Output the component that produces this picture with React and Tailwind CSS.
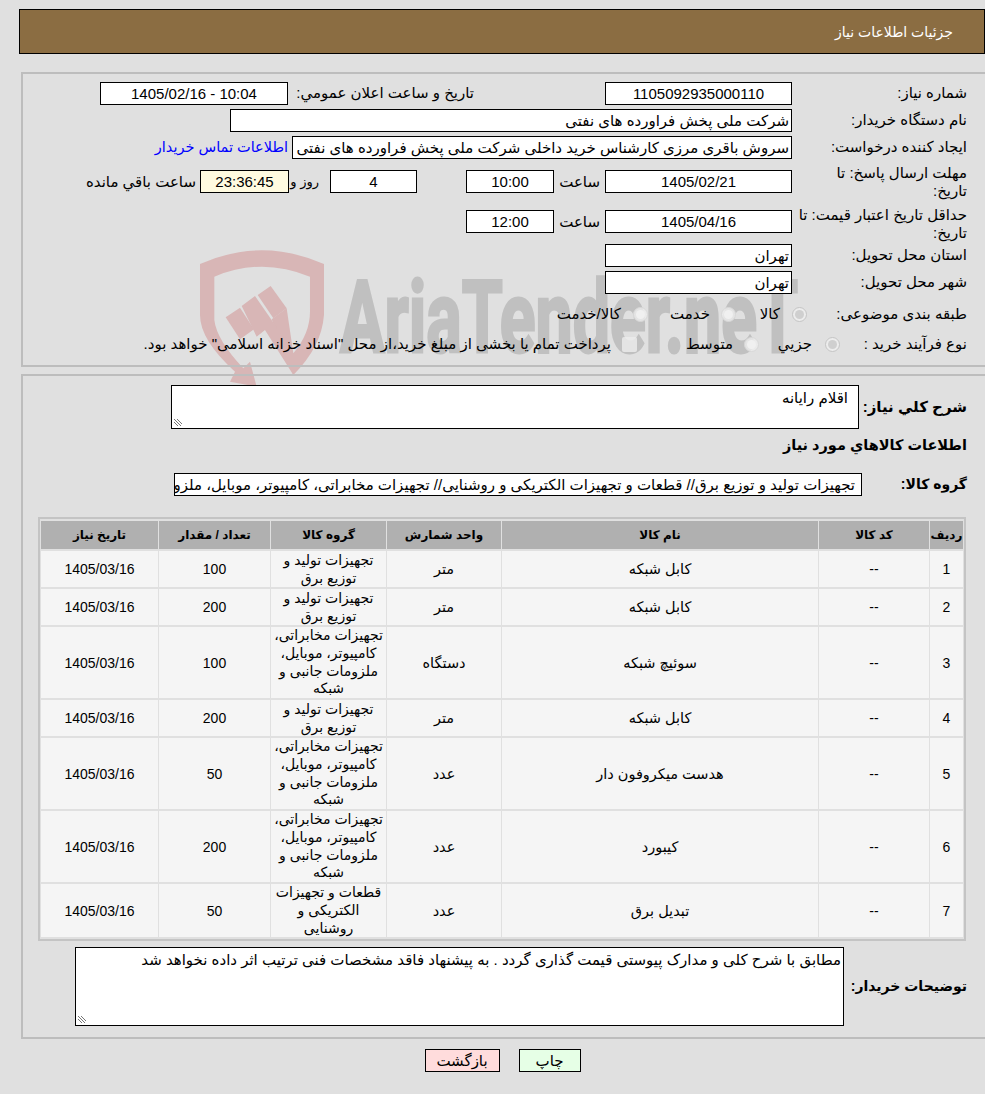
import React from "react";

const rows = [
  { id: 1, name: "کابل شبکه", unit: "متر", group: "تجهیزات تولید و توزیع برق", qty: 100 },
  { id: 2, name: "کابل شبکه", unit: "متر", group: "تجهیزات تولید و توزیع برق", qty: 200 },
  { id: 3, name: "سوئیچ شبکه", unit: "دستگاه", group: "تجهیزات مخابراتی، کامپیوتر، موبایل، ملزومات جانبی و شبکه", qty: 100, tall: true },
  { id: 4, name: "کابل شبکه", unit: "متر", group: "تجهیزات تولید و توزیع برق", qty: 200 },
  { id: 5, name: "هدست میکروفون دار", unit: "عدد", group: "تجهیزات مخابراتی، کامپیوتر، موبایل، ملزومات جانبی و شبکه", qty: 50, tall: true },
  { id: 6, name: "کیبورد", unit: "عدد", group: "تجهیزات مخابراتی، کامپیوتر، موبایل، ملزومات جانبی و شبکه", qty: 200, tall: true },
  { id: 7, name: "تبدیل برق", unit: "عدد", group: "قطعات و تجهیزات الکتریکی و روشنایی", qty: 50, tall: true, narrow: true },
];

const Field = ({ className = "", children }) => (
  <div className={`h-[23px] shrink-0 border border-black text-[15px] leading-[21px] whitespace-nowrap overflow-hidden ${className}`}>
    {children}
  </div>
);

const Radio = ({ dim }) => (
  <span className={`inline-block shrink-0 w-[15px] h-[15px] rounded-full border ${dim ? "border-[#d8d8d8] bg-[#ececec]/80" : "border-[#c4c4c4] bg-[#ececec]"}`}>
    <span className={`block w-[9px] h-[9px] m-[2px] rounded-full ${dim ? "bg-[#f0f0f0]" : "bg-[#cfcfcf]"}`} />
  </span>
);

const Grip = () => (
  <svg className="absolute left-[1px] bottom-[1px]" width="10" height="10" viewBox="0 0 10 10">
    <path d="M1 2 L8 9 M1 5 L5 9 M4 2 L9 7" stroke="#777" strokeWidth="1" />
  </svg>
);

const Watermark = () => (
  <svg dir="ltr" className="absolute left-[190px] top-[240px] pointer-events-none" width="640" height="160" viewBox="0 0 640 160">
    <g transform="scale(0.3333)" fill="#d8b6b6">
      <path fillRule="evenodd" d="M30 72 Q215 -10 402 72 L402 225 Q395 320 310 405 L245 238 L290 205 L310 340 Q360 280 360 215 L360 110 Q215 50 73 110 L73 240 Q80 300 160 385 L180 365 L200 440 L120 425 L135 395 Q30 300 30 225 Z" />
      <path d="M107 232 L150 203 L192 268 L150 298 Z" />
      <path d="M155 198 L195 168 L245 240 L310 340 L310 405 L225 270 L200 290 Z" />
      <path d="M203 165 L242 138 L290 205 L250 235 Z" />
    </g>
    <text x="150" y="112" textAnchor="start" direction="ltr" fontFamily="Roboto" fontWeight="700" fontSize="100" fill="#c0c0c0" stroke="#c0c0c0" strokeWidth="3" textLength="458" lengthAdjust="spacingAndGlyphs">
      AriaTender.neT
    </text>
  </svg>
);

const App = () => {
  return (
    <div dir="rtl" className="relative min-h-[1094px] bg-[#e0e0e0] pt-[9px] text-[15px] text-black font-['Liberation_Sans','DejaVu_Sans',sans-serif]">
      <Watermark />

      {/* Title bar */}
      <div className="ml-[19px] h-[45px] border border-black bg-[#8b6d42] pr-[31px] pt-[12px] text-[14px] text-white leading-[20px]">
        جزئیات اطلاعات نیاز
      </div>

      {/* Details */}
      <div className="relative ml-[21px] mt-[18px] h-[295px] border-2 border-[#bdbdbd] border-r-0 pr-[18px] pt-[8px]">
        <div className="flex items-center h-[23px]">
          <div className="w-[175px]">شماره نیاز:</div>
          <Field className="w-[187px] bg-white text-center">1105092935000110</Field>
          <div className="w-[317px] pr-[131px] whitespace-nowrap">تاریخ و ساعت اعلان عمومي:</div>
          <Field className="w-[188px] bg-white text-center"><span dir="ltr">1405/02/16 - 10:04</span></Field>
        </div>
        <div className="flex items-center mt-[4px] h-[23px]">
          <div className="w-[175px]">نام دستگاه خریدار:</div>
          <Field className="w-[562px] bg-white px-[2px]">شرکت ملی پخش فراورده های نفتی</Field>
        </div>
        <div className="flex items-center mt-[4px] h-[23px]">
          <div className="w-[175px]">ایجاد کننده درخواست:</div>
          <Field className="w-[500px] bg-white px-[2px]">سروش باقری مرزی کارشناس خرید داخلی شرکت ملی پخش فراورده های نفتی</Field>
          <a className="mr-[4px] text-[14.5px] text-[#0000ff] whitespace-nowrap">اطلاعات تماس خریدار</a>
        </div>
        <div className="flex items-start mt-[11px] h-[36px]">
          <div className="w-[175px] -mt-[6px] pl-[14px] leading-[18px]">مهلت ارسال پاسخ: تا تاریخ:</div>
          <Field className="w-[187px] bg-white text-center">1405/02/21</Field>
          <div className="w-[51px] pr-[5px] leading-[23px]">ساعت</div>
          <Field className="w-[88px] bg-white text-center">10:00</Field>
          <div className="w-[49px]" />
          <Field className="w-[87px] bg-white text-center">4</Field>
          <div className="w-[41px] pr-[11px] text-[13px] leading-[23px] whitespace-nowrap">روز و</div>
          <Field className="w-[89px] bg-[#fffbe0] text-center">23:36:45</Field>
          <div className="pr-[4px] leading-[23px] whitespace-nowrap">ساعت باقي مانده</div>
        </div>
        <div className="flex items-start mt-[4px] h-[36px]">
          <div className="w-[175px] -mt-[4px] leading-[18px]">حداقل تاریخ اعتبار قیمت: تا تاریخ:</div>
          <Field className="w-[187px] bg-white text-center">1405/04/16</Field>
          <div className="w-[51px] pr-[5px] leading-[23px]">ساعت</div>
          <Field className="w-[88px] bg-white text-center">12:00</Field>
        </div>
        <div className="flex items-center mt-[-2px] h-[23px]">
          <div className="w-[175px]">استان محل تحویل:</div>
          <Field className="w-[187px] bg-white px-[2px]">تهران</Field>
        </div>
        <div className="flex items-center mt-[4px] h-[23px]">
          <div className="w-[175px]">شهر محل تحویل:</div>
          <Field className="w-[187px] bg-white px-[2px]">تهران</Field>
        </div>
        <div className="flex items-center mt-[9px] h-[23px]">
          <div className="w-[160px]">طبقه بندی موضوعی:</div>
          <Radio />
          <div className="w-[56px] pr-[12px]">کالا</div>
          <Radio dim />
          <div className="w-[73px] pr-[11px]">خدمت</div>
          <Radio dim />
          <div className="pr-[12px]">کالا/خدمت</div>
        </div>
        <div className="flex items-center mt-[7px] h-[23px]">
          <div className="w-[127px]">نوع فرآیند خرید :</div>
          <Radio />
          <div className="w-[66px] pr-[13px]">جزيي</div>
          <Radio dim />
          <div className="w-[107px] pr-[11px]">متوسط</div>
          <span className="shrink-0 w-[15px] h-[15px] rounded-[2px] bg-[#ececec]/80" />
          <div className="pr-[11px] whitespace-nowrap">پرداخت تمام یا بخشی از مبلغ خرید،از محل "اسناد خزانه اسلامی" خواهد بود.</div>
        </div>
      </div>

      {/* Goods */}
      <div className="relative ml-[21px] mt-[7px] h-[665px] border-2 border-[#bdbdbd] border-r-0 pr-[18px] pt-[9px]">
        <div className="flex items-center">
          <div className="w-[108px] font-bold text-[15px] whitespace-nowrap">شرح كلي نياز:</div>
          <div className="relative w-[688px] h-[44px] border border-black bg-white pr-[10px] pt-[1px]">
            اقلام رایانه
            <Grip />
          </div>
        </div>
        <div className="mt-[6px] font-bold text-[14.5px] leading-[20px]">اطلاعات كالاهاي مورد نياز</div>
        <div className="flex items-center mt-[18px]">
          <div className="w-[105px] font-bold text-[14px] whitespace-nowrap">گروه کالا:</div>
          <Field className="w-[688px] bg-white px-[6px]">تجهیزات تولید و توزیع برق// قطعات و تجهیزات الکتریکی و روشنایی// تجهیزات مخابراتی، کامپیوتر، موبایل، ملزومات جانبی و شبکه</Field>
        </div>

        <table className="mt-[21px] mr-[1px] w-[928px] table-fixed border-separate border-spacing-x-[1px] border-spacing-y-[2px] border-2 border-[#c4c4c4] text-center text-[14px] leading-[18px]">
          <thead>
            <tr className="h-[28px] bg-[#b0b0b0] font-bold text-[12px]">
              <th className="w-[33px]">ردیف</th>
              <th className="w-[110px]">کد کالا</th>
              <th className="w-[316px]">نام کالا</th>
              <th className="w-[114px]">واحد شمارش</th>
              <th className="w-[115px]">گروه کالا</th>
              <th className="w-[111px]">تعداد / مقدار</th>
              <th>تاریخ نیاز</th>
            </tr>
          </thead>
          <tbody>
            {rows.map((r) => (
              <tr key={r.id} className="bg-[#f5f5f5]">
                <td>{r.id}</td>
                <td>--</td>
                <td className="text-[14.5px]">{r.name}</td>
                <td className="text-[14.5px]">{r.unit}</td>
                <td className={`${r.narrow ? "px-[2px]" : ""} ${r.tall ? "leading-[17.75px]" : ""}`}>{r.group}</td>
                <td>{r.qty}</td>
                <td>1405/03/16</td>
              </tr>
            ))}
          </tbody>
        </table>

        <div className="flex items-center mt-[6px]">
          <div className="w-[123px] font-bold text-[14px] whitespace-nowrap">توضیحات خریدار:</div>
          <div className="relative w-[769px] h-[79px] border border-black bg-white px-[2px] pt-[1px] whitespace-nowrap overflow-hidden">
            مطابق با شرح کلی و مدارک پیوستی قیمت گذاری گردد . به پیشنهاد فاقد مشخصات فنی ترتیب اثر داده نخواهد شد
            <Grip />
          </div>
        </div>
      </div>

      {/* Actions */}
      <div className="flex justify-center gap-[19px] mt-[10px] pl-[20px]">
        <button className="w-[62px] h-[23px] border border-black bg-[#e6ffe6] leading-[20px]">چاپ</button>
        <button className="w-[75px] h-[23px] border border-black bg-[#ffdcdc] leading-[20px]">بازگشت</button>
      </div>
    </div>
  );
};

export default App;
